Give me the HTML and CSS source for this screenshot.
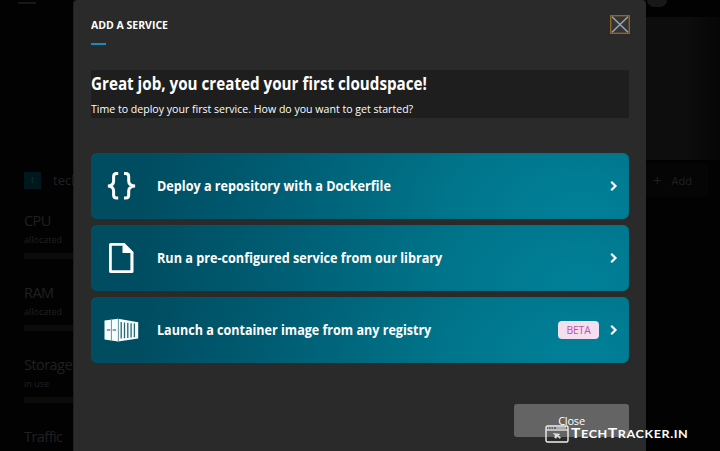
FILE: index.html
```html
<!DOCTYPE html>
<html lang="en">
<head>
<meta charset="utf-8">
<title>Add a service</title>
<link rel="stylesheet" href="styles.css">
</head>
<body>
<main class="page">
  <header class="topbar"><span class="menu-mark"></span><span class="avatar"></span></header>
  <div class="hero"></div>
  <div class="cloud-row"><span class="cloud-icon">t</span><span class="cloud-name">tech</span><span class="add"><span class="plus">+</span>Add</span></div>
  <section class="metric"><h3>CPU</h3><p>allocated</p><div class="meter"></div></section>
  <section class="metric"><h3>RAM</h3><p>allocated</p><div class="meter"></div></section>
  <section class="metric"><h3>Storage</h3><p>in use</p><div class="meter"></div></section>
  <section class="metric"><h3>Traffic</h3></section>
</main>
<div class="modal">
  <header class="modal-head">
    <h1><span class="fit">ADD A SERVICE</span></h1>
    <button class="dismiss" aria-label="Close dialog"><svg width="20" height="19" viewBox="0 0 20 19"><rect x=".7" y=".7" width="18.6" height="17.6" fill="#343434" stroke="#8f6a24" stroke-width="1.3"/><path d="M2 1.8 18 17.2M18 1.8 2 17.2" stroke="#9ba4b2" stroke-width="1.5"/></svg></button>
  </header>
  <div class="intro">
    <h2><span class="fit">Great job, you created your first cloudspace!</span></h2>
    <p><span class="fit">Time to deploy your first service. How do you want to get started?</span></p>
  </div>
  <div class="options">
    <button class="option">
      <svg class="icon" width="36" height="32" viewBox="0 0 36 32" fill="none" stroke="#fff" stroke-width="3"><path d="M14.2 3.5H12.5Q9.6 3.5 9.6 6.5V11Q9.6 15.5 4 16Q9.6 16.5 9.6 21V25Q9.6 28 12.5 28H14.2M20 3.5H21.8Q24.7 3.5 24.7 6.5V11Q24.7 15.5 31 16Q24.7 16.5 24.7 21V25Q24.7 28 21.8 28H20"/></svg>
      <span class="label l1">Deploy a repository with a Dockerfile</span>
      <svg class="chevron" width="10" height="12" viewBox="0 0 10 12"><path d="m2.2 1.7 4.3 4.3-4.3 4.3" fill="none" stroke="#fff" stroke-width="2.2"/></svg>
    </button>
    <button class="option">
      <svg class="icon" width="36" height="32" viewBox="0 0 36 32"><path d="M7 1H20.5L29.5 10V29.5Q29.5 31 28 31H7Q5 31 5 29.5V2.5Q5 1 7 1ZM7.8 3.8V28.2H26.4V11H18.5V3.8Z" fill="#fff" fill-rule="evenodd"/></svg>
      <span class="label l2">Run a pre-configured service from our library</span>
      <svg class="chevron" width="10" height="12" viewBox="0 0 10 12"><path d="m2.2 1.7 4.3 4.3-4.3 4.3" fill="none" stroke="#fff" stroke-width="2.2"/></svg>
    </button>
    <button class="option">
      <svg class="icon" width="36" height="32" viewBox="0 0 36 32"><path d="m.5 6.5 13.7-1.8 20 3.5v16.3l-20 3-13.7-2Z" fill="#f7ffff"/><path d="M7.4 6v20.3M14.4 5v22" stroke="#40788a" stroke-width=".8"/><path d="M2.8 16h3.5M8.6 16h3.5" stroke="#204b5b" stroke-width="1.2"/><path d="M17.2 8v16.5M20.5 8.4v15.8M23.8 8.8V24M27.1 9.2v14.4M30.4 9.5v13.8" stroke="#246578" stroke-width="1.3"/></svg>
      <span class="label l3">Launch a container image from any registry</span><span class="beta">BETA</span>
      <svg class="chevron" width="10" height="12" viewBox="0 0 10 12"><path d="m2.2 1.7 4.3 4.3-4.3 4.3" fill="none" stroke="#fff" stroke-width="2.2"/></svg>
    </button>
  </div>
  <button class="close">Close</button>
</div>
<div class="watermark">
  <svg width="24" height="18" viewBox="0 0 24 18" fill="none" stroke="#eee"><rect x="1" y="1" width="22" height="16" rx="1.5" stroke-width="1.4"/><path d="M1 5h22" stroke-width="1.3"/><path d="M3 3h1M5.5 3h1M8 3h1M11 3h10" stroke-width="1"/><path d="m8 8.3 7 .7-1.7 1.4 2.5 2.2-1 1-2.6-2-.8 1.6-1.8-.3.4-2.6Z" fill="#ddd" stroke-width=".3"/></svg>
  <span class="brand">T<small>ECH</small>T<small>RACKER.IN</small></span>
</div>
</body>
</html>
```
FILE: styles.css
```css
* { box-sizing: border-box; }
body { margin: 0; width: 720px; height: 451px; overflow: hidden; position: relative; background: #020202; color: #fff; font-family: "Open Sans", "Noto Sans", sans-serif; }
h1, h2, h3, p { margin: 0; }
button { font: inherit; color: inherit; border: 0; padding: 0; }
svg { display: block; flex: none; }
.page { height: 451px; overflow: hidden; color: #202020; }
.topbar { height: 17px; display: flex; justify-content: space-between; padding: 0 53px 0 18px; }
.menu-mark { width: 18px; height: 2px; margin-top: 2px; background: #171717; }
.avatar { width: 20px; height: 7px; border-radius: 0 0 10px 10px; background: #181818; }
.hero { height: 143px; margin-left: 646px; background: linear-gradient(90deg, #0d0d0d 55%, #060606); }
.cloud-row { height: 40px; display: flex; align-items: center; padding-left: 24px; font-size: 13px; }
.cloud-icon { width: 17px; height: 17px; background: #00171c; color: #0b3841; font-size: 9px; line-height: 16px; text-align: center; }
.cloud-name { margin-left: 12px; }
.add { margin-left: auto; margin-right: 12px; width: 68px; height: 34px; display: flex; align-items: center; padding-left: 13px; background: #050505; font-size: 11px; }
.plus { font-size: 15px; margin-right: 10px; }
.metric { height: 72px; padding: 12px 0 0 24px; }
.metric h3 { font-size: 14.5px; line-height: 18px; font-weight: 400; letter-spacing: -.55px; }
.metric p { font-size: 9px; line-height: 19px; }
.meter { width: 600px; height: 6px; margin-top: 4px; background: #0b0b0b; }
.modal { position: absolute; left: 73px; top: 0; width: 573px; height: 451px; padding: 0 17px; background: #2a2a2a; border-left: 1px solid #202020; border-radius: 4px 4px 0 0; display: flex; flex-direction: column; }
.modal-head { height: 70px; display: flex; justify-content: space-between; padding-top: 15px; }
.modal h1 { height: 31px; font-size: 11px; line-height: 20px; font-weight: 700; }
.modal h1::after { content: ""; display: block; width: 15px; height: 2px; margin-top: 8px; background: #168dbd; }
.dismiss { width: 20px; height: 19px; margin-right: -1px; background: none; }
.intro { height: 48px; background: #1e1e1e; }
.fit { display: inline-block; white-space: nowrap; transform-origin: left center; }
.modal h1 .fit { display: block; width: max-content; transform: scaleX(.955); }
.intro h2 { font-size: 17px; line-height: 27px; font-weight: 700; height: 27px; }
.intro h2 .fit { transform: scaleX(.894); }
.intro p { font-size: 11.5px; line-height: 24px; height: 21px; }
.intro p .fit { transform: scaleX(.919); }
.options { margin-top: 35px; display: flex; flex-direction: column; gap: 6px; }
.option { height: 66px; border-radius: 6px; display: flex; align-items: center; padding: 0 10px 0 13px; background: radial-gradient(ellipse 450px 260px at 91% 85%, #008199 0, #00758b 30%, #005d73 68%, #004c60 100%); box-shadow: inset 0 0 1px 1px rgba(0, 100, 120, .25); }
.label { margin-left: 17px; padding-bottom: 1px; font-size: 14.5px; line-height: 22px; font-weight: 700; white-space: nowrap; transform-origin: left center; }
.l1 { transform: scaleX(.871); }
.l2 { transform: scaleX(.873); }
.l3 { transform: scaleX(.866); }
.chevron { margin-left: auto; }
.beta { margin-left: auto; width: 41px; height: 18px; border-radius: 4px; background: #f3dff0; color: #b955a5; font-size: 10.5px; line-height: 18px; text-align: center; letter-spacing: -.2px; }
.beta + .chevron { margin-left: 10px; }
.close { width: 115px; height: 33px; margin: 41px 0 0 auto; border-radius: 3px; background: #646464; font-size: 11px; line-height: 33px; letter-spacing: -.2px; }
.watermark { position: absolute; left: 545px; top: 422px; display: flex; align-items: center; }
.brand { margin-left: 2px; font: 700 13.5px/22px Lato, sans-serif; letter-spacing: .5px; white-space: nowrap; transform: scaleX(1.165); transform-origin: left center; }
.brand small { font-size: 10.8px; }
```
